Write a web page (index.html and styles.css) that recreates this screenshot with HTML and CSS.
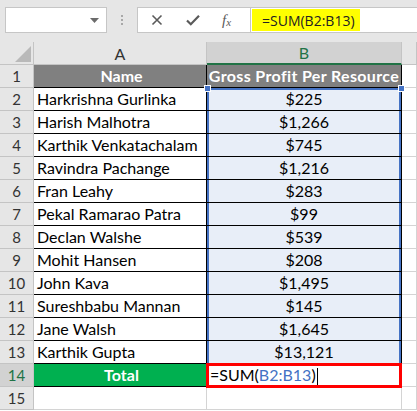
FILE: index.html
```html
<!DOCTYPE html>
<html lang="en">
<head>
    <meta charset="UTF-8">
    <title>SUM formula</title>
    <link rel="stylesheet" href="styles.css">
</head>
<body>

    <div class="toolbar">
        <div class="name-box">
            <svg class="caret" width="9" height="5" viewBox="0 0 9 5"><path d="M0 0h9L4.5 5z" fill="#6b6b6b"/></svg>
        </div>
        <div class="grip"><span></span><span></span><span></span></div>
        <div class="fx-buttons">
            <svg width="12" height="12" viewBox="0 0 12 12"><path d="M1.5 1.5l9 9M10.5 1.5l-9 9" stroke="#5a5a5a" stroke-width="1.6" fill="none"/></svg>
            <svg width="14" height="12" viewBox="0 0 14 12"><path d="M1 6.5l3.8 3.8L13 1.8" stroke="#5a5a5a" stroke-width="2.2" fill="none"/></svg>
            <span class="fx">f<sub>x</sub></span>
        </div>
        <div class="formula-input">
            <span class="formula-text">=SUM(B2:B13)</span>
        </div>
    </div>

    <div class="sheet">
        <div class="corner"><svg width="16" height="16" viewBox="0 0 16 16"><path d="M16 0V16H0z" fill="#b9b9b9"/></svg></div>
        <div class="colhead">A</div>
        <div class="colhead sel">B</div>
        <div class="colhead"></div>

        <div class="rowhead">1</div>
        <div class="cell head">Name</div>
        <div class="cell head center wide">Gross Profit Per Resource</div>
        <div class="cell blank"></div>

        <div class="rowhead">2</div>
        <div class="cell">Harkrishna Gurlinka</div>
        <div class="cell center rng rng-top">$225<span class="handle left"></span><span class="handle right"></span></div>
        <div class="cell blank"></div>

        <div class="rowhead">3</div>
        <div class="cell">Harish Malhotra</div>
        <div class="cell center rng">$1,266</div>
        <div class="cell blank"></div>

        <div class="rowhead">4</div>
        <div class="cell">Karthik Venkatachalam</div>
        <div class="cell center rng">$745</div>
        <div class="cell blank"></div>

        <div class="rowhead">5</div>
        <div class="cell">Ravindra Pachange</div>
        <div class="cell center rng">$1,216</div>
        <div class="cell blank"></div>

        <div class="rowhead">6</div>
        <div class="cell">Fran Leahy</div>
        <div class="cell center rng">$283</div>
        <div class="cell blank"></div>

        <div class="rowhead">7</div>
        <div class="cell">Pekal Ramarao Patra</div>
        <div class="cell center rng">$99</div>
        <div class="cell blank"></div>

        <div class="rowhead">8</div>
        <div class="cell">Declan Walshe</div>
        <div class="cell center rng">$539</div>
        <div class="cell blank"></div>

        <div class="rowhead">9</div>
        <div class="cell">Mohit Hansen</div>
        <div class="cell center rng">$208</div>
        <div class="cell blank"></div>

        <div class="rowhead">10</div>
        <div class="cell">John Kava</div>
        <div class="cell center rng">$1,495</div>
        <div class="cell blank"></div>

        <div class="rowhead">11</div>
        <div class="cell">Sureshbabu Mannan</div>
        <div class="cell center rng">$145</div>
        <div class="cell blank"></div>

        <div class="rowhead">12</div>
        <div class="cell">Jane Walsh</div>
        <div class="cell center rng">$1,645</div>
        <div class="cell blank"></div>

        <div class="rowhead">13</div>
        <div class="cell">Karthik Gupta</div>
        <div class="cell center rng">$13,121</div>
        <div class="cell blank"></div>

        <div class="rowhead sel">14</div>
        <div class="cell total">Total</div>
        <div class="cell editing">=SUM(<span class="ref">B2:B13</span>)<span class="caret-line"></span></div>
        <div class="cell blank"></div>

        <div class="rowhead">15</div>
        <div class="cell blank"></div>
        <div class="cell blank"></div>
        <div class="cell blank"></div>
    </div>

</body>
</html>
```

FILE: styles.css
```css
* {
    margin: 0;
    padding: 0;
    box-sizing: border-box;
}

body {
    width: 417px;
    height: 411px;
    overflow: hidden;
    background: #ffffff;
    font-family: 'Lato', 'Liberation Sans', sans-serif;
    color: #000;
}

/* formula bar */
.toolbar {
    height: 42px;
    background: #e6e6e6;
    display: flex;
    align-items: flex-start;
    padding: 7px 0 0 5px;
}

.name-box {
    width: 102px;
    height: 26px;
    background: #fff;
    border: 1px solid #c6c6c6;
    display: flex;
    justify-content: flex-end;
    align-items: center;
    padding-right: 7px;
}

.grip {
    width: 30px;
    height: 26px;
    display: flex;
    flex-direction: column;
    justify-content: center;
    align-items: center;
    gap: 2px;
}

.grip span {
    width: 2px;
    height: 2px;
    background: #a8a8a8;
}

.fx-buttons {
    width: 113px;
    height: 26px;
    background: #fff;
    border: 1px solid #c6c6c6;
    border-right: none;
    display: flex;
    align-items: center;
    padding-left: 13px;
    gap: 23px;
}

.fx {
    font-family: 'Liberation Serif', serif;
    font-style: italic;
    font-size: 15px;
    color: #5a5a5a;
    margin-left: -1px;
}

.fx sub {
    font-size: 11px;
    vertical-align: -1px;
}

.formula-input {
    flex: 1;
    height: 26px;
    background: #fff;
    border: 1px solid #c6c6c6;
    border-right: none;
    padding: 1px 0 1px 1px;
}

.formula-text {
    display: inline-block;
    height: 100%;
    width: 108px;
    background: #ffff00;
    font-family: 'Open Sans', 'Liberation Sans', sans-serif;
    font-size: 14px;
    line-height: 23px;
    padding-left: 10px;
    color: #222;
}

/* grid */
.sheet {
    display: grid;
    grid-template-columns: 34px 173px 195px 1fr;
    grid-template-rows: 23px;
    grid-auto-rows: 23px;
}

.corner,
.colhead,
.rowhead {
    background: #e6e6e6;
    border-right: 1px solid #c4c4c4;
    border-bottom: 1px solid #c4c4c4;
    color: #333;
    font-size: 16px;
    display: flex;
    justify-content: center;
    align-items: center;
}

.corner {
    justify-content: flex-end;
    align-items: flex-end;
    padding: 0 2px 2px 0;
}

.colhead.sel {
    background: #d2d2d2;
    border-bottom: 2px solid #217346;
    color: #217346;
}

.rowhead {
    font-size: 15px;
}

.rowhead.sel {
    background: #d2d2d2;
    color: #217346;
}

.cell {
    position: relative;
    border-right: 1px solid #000;
    border-bottom: 1px solid #000;
    font-size: 16px;
    line-height: 22px;
    padding-left: 3px;
    white-space: nowrap;
}

.cell.center {
    text-align: center;
    padding-left: 0;
}

.cell.head {
    background: #808080;
    color: #fff;
    font-weight: bold;
    text-align: center;
}

.cell.wide {
    letter-spacing: 0.35px;
}

.cell.blank {
    border-right: 1px solid #d4d4d4;
    border-bottom: 1px solid #d4d4d4;
}

.cell.rng {
    background: #e8eef8;
    box-shadow: inset 2px 0 0 #4472c4, inset -2px 0 0 #4472c4;
}

.cell.rng-top {
    box-shadow: inset 2px 0 0 #4472c4, inset -2px 0 0 #4472c4, inset 0 2px 0 #4472c4;
}

.handle {
    position: absolute;
    top: -3px;
    width: 7px;
    height: 7px;
    background: #4472c4;
    border: 1px solid #fff;
}

.handle.left {
    left: -3px;
}

.handle.right {
    right: -4px;
}

.cell.total {
    background: #00b050;
    color: #fff;
    font-weight: bold;
    text-align: center;
}

.cell.editing {
    border-right: 1px solid #d4d4d4;
    border-bottom: 1px solid #d4d4d4;
    padding-left: 3px;
    z-index: 1;
}

.cell.editing::after {
    content: '';
    position: absolute;
    top: -1px;
    left: -1px;
    right: -1px;
    bottom: -2px;
    border: 3px solid #ff0000;
}

.ref {
    color: #4472c4;
}

.caret-line {
    display: inline-block;
    width: 1px;
    height: 17px;
    background: #000;
    vertical-align: -4px;
    margin-left: 1px;
}
```
